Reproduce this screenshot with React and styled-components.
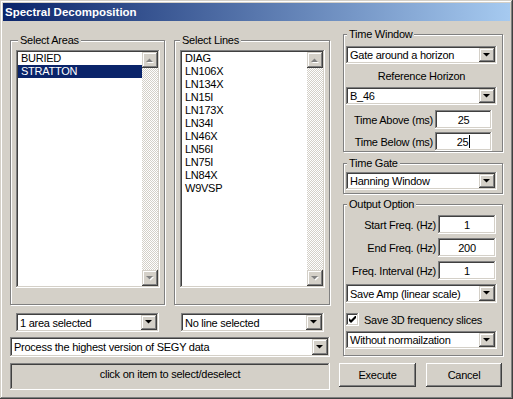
import React from 'react';
import styled, { createGlobalStyle } from 'styled-components';

const FACE = '#d4d0c8';
const SHADOW = '#808080';
const DARK = '#404040';

const GlobalStyle = createGlobalStyle`
  body {
    margin: 0;
    background: ${FACE};
    font-family: "Liberation Sans", Arial, sans-serif;
    font-size: 11px;
    letter-spacing: -0.25px;
    color: #000;
  }
`;

const Window = styled.div`
  width: 513px;
  height: 399px;
  box-sizing: border-box;
  padding: 3px;
  background: ${FACE};
  box-shadow: inset -1px -1px ${DARK}, inset 1px 1px ${FACE},
    inset -2px -2px ${SHADOW}, inset 2px 2px #fff;
`;

const TitleBar = styled.div`
  height: 18px;
  display: flex;
  align-items: center;
  padding-left: 2px;
  background: linear-gradient(to right, #0a246a, #a6caf0);
  color: #fff;
  font-weight: bold;
  font-size: 11.5px;
  letter-spacing: 0;
`;

const Body = styled.div`
  display: flex;
  gap: 9px;
  padding: 13px 7px 0 7px;
`;

const LeftColumn = styled.div`
  width: 320px;
  display: flex;
  flex-direction: column;
  margin-top: 6px;
`;

const RightColumn = styled.div`
  width: 164px;
  display: flex;
  flex-direction: column;
`;

const GroupsRow = styled.div`
  display: flex;
  gap: 9px;
`;

const GroupBox = styled.div`
  position: relative;
  box-sizing: border-box;
  width: ${p => p.$w || 'auto'};
  height: ${p => p.$h}px;
  margin-top: ${p => p.$mt || 0}px;
  margin-left: ${p => p.$ml || 0}px;
  padding: ${p => p.$pad};
  border: 1px solid ${SHADOW};
  box-shadow: inset 1px 1px #fff, 1px 1px #fff;
  display: flex;
  flex-direction: column;
`;

const Legend = styled.span`
  position: absolute;
  top: -7px;
  left: ${p => p.$left}px;
  padding: 0 2px;
  background: ${FACE};
  line-height: 13px;
`;

const sunken = `
  box-shadow: inset -1px -1px #fff, inset 1px 1px ${SHADOW},
    inset -2px -2px ${FACE}, inset 2px 2px ${DARK};
`;

const raised = `
  box-shadow: inset -1px -1px ${DARK}, inset 1px 1px ${FACE},
    inset -2px -2px ${SHADOW}, inset 2px 2px #fff;
`;

const ListBox = styled.div`
  flex: 1;
  display: flex;
  padding: 2px;
  background: #fff;
  ${sunken}
`;

const Rows = styled.div`
  flex: 1;
`;

const Row = styled.div`
  height: 13px;
  line-height: 13px;
  padding-left: 3px;
  background: ${p => (p.$selected ? '#0a246a' : 'transparent')};
  color: ${p => (p.$selected ? '#fff' : '#000')};
`;

const ScrollBar = styled.div`
  width: 16px;
  display: flex;
  flex-direction: column;
`;

const Track = styled.div`
  flex: 1;
  background: repeating-conic-gradient(#fff 0 25%, ${FACE} 0 50%) 0 0 / 2px 2px;
`;

const SmallButton = styled.div`
  width: 16px;
  height: ${p => p.$h || 16}px;
  flex-shrink: 0;
  display: flex;
  align-items: center;
  justify-content: center;
  background: ${FACE};
  ${raised}
`;

const Arrow = ({ up, disabled }) => (
  <svg width="8" height="5" viewBox="0 0 8 5">
    {disabled && (
      <path d={up ? 'M1 5h7L4.5 1.5z' : 'M1 1h7L4.5 4.5z'} fill="#fff" />
    )}
    <path
      d={up ? 'M0 4h7L3.5 0.5z' : 'M0 0h7L3.5 3.5z'}
      fill={disabled ? SHADOW : '#000'}
    />
  </svg>
);

const Combo = styled.div`
  box-sizing: border-box;
  width: ${p => p.$w}px;
  height: ${p => p.$h || 19}px;
  margin-top: ${p => p.$mt || 0}px;
  margin-left: ${p => p.$ml || 0}px;
  padding: 2px;
  display: flex;
  align-items: stretch;
  background: #fff;
  flex-shrink: 0;
  ${sunken}
`;

const ComboText = styled.div`
  flex: 1;
  display: flex;
  align-items: center;
  padding-left: 2px;
  white-space: nowrap;
`;

const DropDown = ({ text, w, h, mt, ml }) => (
  <Combo $w={w} $h={h} $mt={mt} $ml={ml}>
    <ComboText>{text}</ComboText>
    <SmallButton $h={(h || 19) - 4}>
      <Arrow />
    </SmallButton>
  </Combo>
);

const ComboRow = styled.div`
  display: flex;
  margin-top: 8px;
`;

const StatusPanel = styled.div`
  height: 27px;
  margin-top: 6px;
  display: flex;
  justify-content: center;
  padding-top: 5px;
  box-sizing: border-box;
  ${sunken}
`;

const CenterLabel = styled.div`
  text-align: center;
  margin-top: 5px;
  line-height: 14px;
`;

const FieldRow = styled.div`
  display: flex;
  justify-content: flex-end;
  align-items: center;
  gap: 2px;
  white-space: nowrap;
  margin-top: ${p => p.$mt || 0}px;
  padding-right: ${p => p.$pr}px;
`;

const Input = styled.div`
  box-sizing: border-box;
  width: ${p => p.$w}px;
  height: 19px;
  flex-shrink: 0;
  display: flex;
  align-items: center;
  justify-content: center;
  background: #fff;
  ${sunken}
`;

const Caret = styled.span`
  display: inline-block;
  width: 1px;
  height: 13px;
  background: #000;
  margin-left: 1px;
`;

const CheckRow = styled.div`
  display: flex;
  align-items: center;
  gap: 5px;
  margin-top: 10px;
  white-space: nowrap;
`;

const CheckBox = styled.div`
  width: 13px;
  height: 13px;
  box-sizing: border-box;
  background: #fff;
  display: flex;
  align-items: center;
  justify-content: center;
  ${sunken}
`;

const ButtonRow = styled.div`
  display: flex;
  gap: 10px;
  margin-top: 7px;
`;

const Button = styled.div`
  width: ${p => p.$w}px;
  height: 24px;
  display: flex;
  align-items: center;
  justify-content: center;
  background: ${FACE};
  box-shadow: inset -1px -1px ${DARK}, inset 1px 1px #fff,
    inset -2px -2px ${SHADOW}, inset 2px 2px ${FACE};
`;

const ListPanel = ({ title, items, selected, legendLeft, width }) => (
  <GroupBox $w={width} $h={265} $pad="9px 4px 16px 5px">
    <Legend $left={legendLeft}>{title}</Legend>
    <ListBox>
      <Rows>
        {items.map(item => (
          <Row key={item} $selected={item === selected}>
            {item}
          </Row>
        ))}
      </Rows>
      <ScrollBar>
        <SmallButton>
          <Arrow up disabled />
        </SmallButton>
        <Track />
        <SmallButton>
          <Arrow disabled />
        </SmallButton>
      </ScrollBar>
    </ListBox>
  </GroupBox>
);

const areas = ['BURIED', 'STRATTON'];
const lines = [
  'DIAG', 'LN106X', 'LN134X', 'LN15I', 'LN173X', 'LN34I',
  'LN46X', 'LN56I', 'LN75I', 'LN84X', 'W9VSP',
];

const App = () => (
  <>
    <GlobalStyle />
    <Window>
      <TitleBar>Spectral Decomposition</TitleBar>
      <Body>
        <LeftColumn>
          <GroupsRow>
            <ListPanel title="Select Areas" items={areas} selected="STRATTON" legendLeft={7} width="155px" />
            <ListPanel title="Select Lines" items={lines} legendLeft={5} width="156px" />
          </GroupsRow>
          <ComboRow>
            <DropDown text="1 area selected" w={143} ml={6} />
            <DropDown text="No line selected" w={143} ml={22} />
          </ComboRow>
          <DropDown text="Process the highest version of SEGY data" w={320} h={20} mt={5} />
          <StatusPanel>click on item to select/deselect</StatusPanel>
        </LeftColumn>

        <RightColumn>
          <GroupBox $h={118} $ml={4} $pad="11px 5px 0 2px">
            <Legend $left={3}>Time Window</Legend>
            <DropDown text="Gate around a horizon" w={151} h={18} />
            <CenterLabel>Reference Horizon</CenterLabel>
            <DropDown text="B_46" w={151} h={18} mt={4} />
            <FieldRow $mt={5} $pr={5}>
              Time Above (ms)
              <Input $w={57}>25</Input>
            </FieldRow>
            <FieldRow $mt={3} $pr={5}>
              Time Below (ms)
              <Input $w={57}>
                25
                <Caret />
              </Input>
            </FieldRow>
          </GroupBox>

          <GroupBox $h={31} $ml={4} $mt={11} $pad="8px 5px 0 2px">
            <Legend $left={3}>Time Gate</Legend>
            <DropDown text="Hanning Window" w={151} h={18} />
          </GroupBox>

          <GroupBox $h={152} $ml={4} $mt={10} $pad="10px 5px 0 2px">
            <Legend $left={3}>Output Option</Legend>
            <FieldRow $pr={1}>
              Start Freq. (Hz)
              <Input $w={58}>1</Input>
            </FieldRow>
            <FieldRow $mt={4} $pr={1}>
              End Freq. (Hz)
              <Input $w={58}>200</Input>
            </FieldRow>
            <FieldRow $mt={4} $pr={1}>
              Freq. Interval (Hz)
              <Input $w={58}>1</Input>
            </FieldRow>
            <DropDown text="Save Amp (linear scale)" w={151} h={19} mt={4} />
            <CheckRow>
              <CheckBox>
                <svg width="7" height="7" viewBox="0 0 7 7">
                  <path d="M0 2v3l2 2 5-5V-1L2 4z" fill="#000" />
                </svg>
              </CheckBox>
              Save 3D frequency slices
            </CheckRow>
            <DropDown text="Without normailzation" w={151} h={18} mt={5} />
          </GroupBox>

          <ButtonRow>
            <Button $w={77}>Execute</Button>
            <Button $w={76}>Cancel</Button>
          </ButtonRow>
        </RightColumn>
      </Body>
    </Window>
  </>
);

export default App;
